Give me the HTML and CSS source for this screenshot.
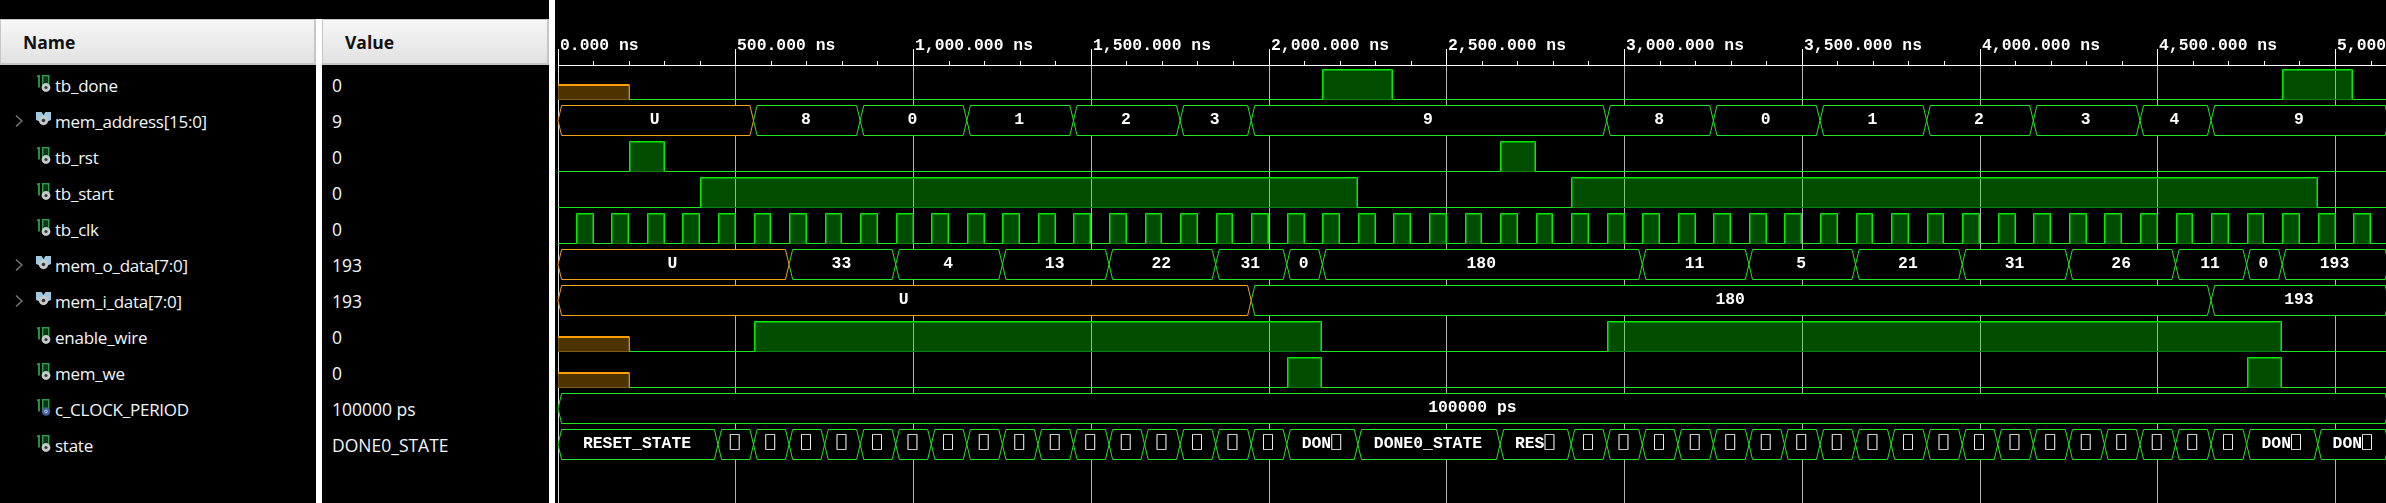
FILE: index.html
```html
<!DOCTYPE html>
<html>
	<head>
		<meta charset="UTF-8">
		<title>Waveform</title>
		<link rel="stylesheet" href="styles.css">
	</head>
	<body>
		<div id="viewer">
			<div id="signals">
				<div class="col col-name">
					<div class="head">Name</div>
					<ul id="names"></ul>
				</div>
				<div class="col col-value">
					<div class="head">Value</div>
					<ul id="values"></ul>
				</div>
			</div>
			<svg id="wave" width="1831" height="503" viewBox="555 0 1831 503"></svg>
		</div>
		<script type="text/javascript" src="wave.js"></script>
	</body>
</html>
```

FILE: styles.css
```css
*{
	margin: 0;
	padding: 0;
	box-sizing: border-box;
}
body{
	background-color: #000;
	overflow: hidden;
}
#viewer{
	display: flex;
	width: 2386px;
	height: 503px;
}
#signals{
	display: flex;
	flex: none;
	width: 555px;
	height: 503px;
	padding-top: 19px;
	border-right: 6px solid #fff;
	font-family: "Open Sans", "Noto Sans", sans-serif;
	font-size: 17.5px;
	color: #f4f6fa;
}
.col-name{
	width: 316px;
}
.col-value{
	width: 233px;
	border-left: 6px solid #fff;
}
.head{
	height: 46px;
	line-height: 44px;
	border: 1px solid #c6c6c6;
	border-width: 1px 2px 2px 1px;
	background: linear-gradient(#f7f7f7, #e1e1e1);
	color: #111;
	font-weight: 700;
	font-size: 17.5px;
}
.col-name .head{
	padding-left: 22px;
}
.col-value .head{
	padding-left: 22px;
}
.col ul{
	list-style: none;
	padding-top: 2px;
}
.col li{
	display: flex;
	align-items: center;
	height: 36px;
	white-space: nowrap;
}
#names li{
	font-size: 17px;
	letter-spacing: -0.25px;
}
#values li{
	padding-left: 10px;
}
.arrow{
	flex: none;
	width: 36px;
	height: 18px;
	padding-left: 15px;
}
.arrow svg,.icon{
	display: block;
}
.icon{
	flex: none;
	width: 16px;
	height: 18px;
	margin-right: 3px;
	margin-bottom: 2px;
}
#wave{
	display: block;
	flex: none;
	will-change: transform;
}
#wave text{
	font-family: "Liberation Mono", "DejaVu Sans Mono", monospace;
	font-weight: 700;
	font-size: 16.4px;
	fill: #fff;
}
#wave text .box{
	font-family: "DejaVu Sans Mono", monospace;
	font-weight: 400;
	font-size: 16.4px;
}
.axis{
	stroke: #fff;
	stroke-width: 1;
	fill: none;
}
.grid{
	stroke: #b4b4b4;
	stroke-width: 1;
}
.grid0{
	stroke: #d8d8d8;
}
.low{
	stroke: #1fe81f;
	stroke-width: 1;
	fill: none;
}
.pulse{
	fill: rgba(0, 255, 0, 0.3);
}
.pulse-base{
	stroke: #0b800b;
	stroke-width: 1;
	fill: none;
}
.pulse-inner{
	stroke: #0a9a0a;
	stroke-width: 1;
	fill: none;
}
.pulse-edge{
	stroke: #00ec00;
	stroke-width: 1;
	fill: none;
}
.bus-fill{
	fill: #000;
}
.bus{
	stroke: #22e622;
	stroke-width: 1;
	fill: none;
}
.bus-x{
	stroke: #f2a318;
}
.unknown{
	fill: #4d3300;
	stroke: #7c5a18;
	stroke-width: 1;
}
.unknown-top{
	stroke: #ff9c00;
	stroke-width: 2;
}
```

FILE: wave.js
```js
var NS = "http://www.w3.org/2000/svg";
var X0 = 558;
var UNIT = 17.775; // 50ns
var END = 103;
var svg = document.getElementById("wave");

function x(u) {
	return X0 + u * UNIT;
}

function add(tag, attrs, parent) {
	var el = document.createElementNS(NS, tag);
	for(var k in attrs) {
		el.setAttribute(k, attrs[k]);
	}
	(parent || svg).appendChild(el);
	return el;
}

function line(x1, y1, x2, y2, cls) {
	return add("line", {x1: x1, y1: y1, x2: x2, y2: y2, "class": cls});
}

function snap(v) {
	return Math.round(v) + 0.5;
}

// the missing-glyph box of the simulator
var BOX = "\u2395";

function label(px, py, str, anchor) {
	var t = add("text", {x: px, y: py, "text-anchor": anchor || "middle"});
	var at = str.indexOf(BOX);
	if(at < 0) {
		t.textContent = str;
		return;
	}
	t.appendChild(document.createTextNode(str.slice(0, at)));
	add("tspan", {"class": "box"}, t).textContent = BOX;
}

// high = pulses as [from, to], in 50ns units
var rows = [
	{name: "tb_done", value: "0", icon: "bit", x: true, high: [[43, 47], [97, 101]]},
	{name: "mem_address[15:0]", value: "9", icon: "vec", segs: [
		[0, "U", 1], [11, "8"], [17, "0"], [23, "1"], [29, "2"], [35, "3"], [39, "9"], [59, "8"], [65, "0"],
		[71, "1"], [77, "2"], [83, "3"], [89, "4"], [93, "9"]]},
	{name: "tb_rst", value: "0", icon: "bit", high: [[4, 6], [53, 55]]},
	{name: "tb_start", value: "0", icon: "bit", high: [[8, 45], [57, 99]]},
	{name: "tb_clk", value: "0", icon: "bit", high: "clk"},
	{name: "mem_o_data[7:0]", value: "193", icon: "vec", segs: [
		[0, "U", 1], [13, "33"], [19, "4"], [25, "13"], [31, "22"], [37, "31"], [41, "0"], [43, "180"], [61, "11"],
		[67, "5"], [73, "21"], [79, "31"], [85, "26"], [91, "11"], [95, "0"], [97, "193"]]},
	{name: "mem_i_data[7:0]", value: "193", icon: "vec", segs: [[0, "U", 1], [39, "180"], [93, "193"]]},
	{name: "enable_wire", value: "0", icon: "bit", x: true, high: [[11, 43], [59, 97]]},
	{name: "mem_we", value: "0", icon: "bit", x: true, high: [[41, 43], [95, 97]]},
	{name: "c_CLOCK_PERIOD", value: "100000 ps", icon: "const", segs: [[0, "100000 ps"]]},
	{name: "state", value: "DONE0_STATE", icon: "bit", segs: "state"}
];

// state row: long names, then one cell per clock
function stateSegs() {
	var segs = [[0, "RESET_STATE"]];
	var i;
	for(i = 9; i < 41; i += 2) {
		segs.push([i, BOX]);
	}
	segs.push([41, "DON" + BOX], [45, "DONE0_STATE"], [53, "RES" + BOX]);
	for(i = 57; i < 95; i += 2) {
		segs.push([i, BOX]);
	}
	segs.push([95, "DON" + BOX], [99, "DON" + BOX]);
	return segs;
}

function clkPulses() {
	var p = [];
	for(var i = 1; i < END - 1; i += 2) {
		p.push([i, i + 1]);
	}
	return p;
}

// ruler and grid
function drawRuler() {
	var names = ["0.000", "500.000", "1,000.000", "1,500.000", "2,000.000", "2,500.000",
		"3,000.000", "3,500.000", "4,000.000", "4,500.000", "5,000.000"];
	for(var i = 0; i <= 51; i++) {
		var px = Math.floor(x(i * 2)) + 0.5;
		if(i % 5 == 0) {
			line(px, 49, px, 65, "axis");
			line(px, 66, px, 503, i == 0 ? "grid grid0" : "grid");
			label(px + 1.5, 50, names[i / 5] + " ns", "start");
		}else{
			line(px, 61, px, 65, "axis");
		}
	}
	line(558, 65.5, 2386, 65.5, "axis");
}

function drawBit(row, yTop, yBottom) {
	var start = row.x ? x(4) : X0;
	var pulses = row.high == "clk" ? clkPulses() : row.high;
	line(start, yBottom, 2386, yBottom, "low");
	if(row.x) {
		var mid = yTop + 15;
		add("rect", {x: X0 + 0.5, y: mid + 1, width: x(4) - X0 - 1, height: 14, "class": "unknown"});
		line(X0, mid + 0.5, x(4), mid + 0.5, "unknown-top");
		line(snap(x(4)), mid, snap(x(4)), yBottom, "low");
	}
	for(var i = 0; i < pulses.length; i++) {
		var a = Math.round(x(pulses[i][0])) + 0.5;
		var b = Math.round(x(pulses[i][1])) - 0.5;
		add("rect", {x: a, y: yTop, width: b - a, height: yBottom - yTop, "class": "pulse"});
		line(a, yBottom, b, yBottom, "pulse-base");
		add("path", {d: "M" + (a + 1) + " " + yBottom + "V" + (yTop + 1) + "H" + (b - 1) + "V" + yBottom, "class": "pulse-inner"});
		add("path", {d: "M" + a + " " + yBottom + "V" + yTop + "H" + b + "V" + yBottom, "class": "pulse-edge"});
	}
}

function drawBus(segs, yTop, yBottom) {
	var mid = (yTop + yBottom) / 2;
	var i, a, b;
	var shapes = [];
	// fills first, so the crossings stay visible
	for(i = 0; i < segs.length; i++) {
		a = x(segs[i][0]);
		b = x(i + 1 < segs.length ? segs[i + 1][0] : END);
		shapes[i] = [a, mid, a + 3.6, yTop, b - 3.6, yTop, b, mid, b - 3.6, yBottom, a + 3.6, yBottom].join(" ");
		add("polygon", {points: shapes[i], "class": "bus-fill"});
	}
	for(i = 0; i < segs.length; i++) {
		a = x(segs[i][0]);
		b = x(i + 1 < segs.length ? segs[i + 1][0] : END);
		add("polygon", {points: shapes[i], "class": segs[i][2] ? "bus bus-x" : "bus"});
		label((a + b) / 2 - 1, mid + 3, segs[i][1]);
	}
}

var ICONS = {
	bit: '<path d="M1 1.5L3 .8V12.5" stroke="#2f9e4a" stroke-width="1.8" fill="none"/>' +
		'<rect x="6.7" y=".7" width="6" height="12" stroke="#2f9e4a" stroke-width="1.4" fill="#0c3316"/>' +
		'<circle cx="10" cy="12.5" r="4.4" fill="#c6caca"/><circle cx="10" cy="12.5" r="1.6" fill="#333"/>',
	vec: '<path d="M0 1H5.5L7.5 4L9.5 1H15V9L7.5 12L0 9Z" fill="#a0c8e0"/>' +
		'<circle cx="7.5" cy="9.5" r="4.7" fill="#c6caca"/><circle cx="7.5" cy="9.5" r="1.8" fill="#333"/>',
	"const": '<path d="M1 1.5L3 .8V12.5" stroke="#2f9e4a" stroke-width="1.8" fill="none"/>' +
		'<rect x="6.7" y=".7" width="6" height="12" stroke="#2f9e4a" stroke-width="1.4" fill="#0c3316"/>' +
		'<circle cx="10" cy="12.5" r="4.2" fill="#44609c"/><circle cx="10" cy="12.5" r="1.4" fill="none" stroke="#dde" stroke-width="0.9"/>'
};
var ARROW = '<svg width="8" height="18" viewBox="0 0 8 18"><path d="M1 3.5L7 9L1 14.5" stroke="#777" stroke-width="1.5" fill="none"/></svg>';

function drawList() {
	var names = document.getElementById("names");
	var values = document.getElementById("values");
	for(var i = 0; i < rows.length; i++) {
		var li = document.createElement("li");
		var isVec = rows[i].icon == "vec";
		li.innerHTML = '<span class="arrow">' + (isVec ? ARROW : "") + "</span>" +
			'<svg class="icon" viewBox="0 0 16 18">' + ICONS[rows[i].icon] + "</svg>";
		li.appendChild(document.createTextNode(rows[i].name));
		names.appendChild(li);
		var v = document.createElement("li");
		v.textContent = rows[i].value;
		values.appendChild(v);
	}
}

drawRuler();
for(var r = 0; r < rows.length; r++) {
	var rowTop = 69.5 + r * 36;
	if(rows[r].segs) {
		drawBus(rows[r].segs == "state" ? stateSegs() : rows[r].segs, rowTop, rowTop + 30);
	}else{
		drawBit(rows[r], rowTop, rowTop + 30);
	}
}
drawList();
```
